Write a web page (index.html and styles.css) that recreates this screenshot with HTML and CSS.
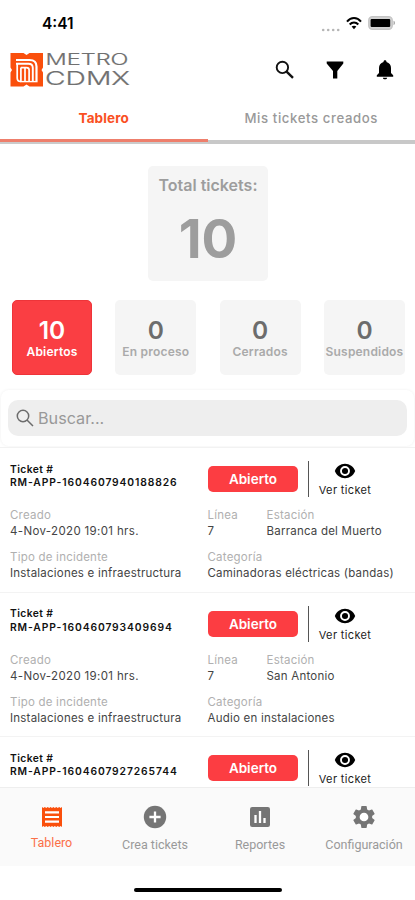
FILE: index.html
```html
<!DOCTYPE html>
<html lang="es">
<head>
<meta charset="utf-8">
<title>Metro CDMX</title>
<link rel="stylesheet" href="styles.css">
</head>
<body>
<div class="app">
  <div class="status">
    <span class="time">4:41</span>
    <div class="signals">
      <svg width="20" height="16" viewBox="0 0 20 16" fill="#b5b5b5"><circle cx="2.2" cy="11" r="1.3"/><circle cx="7.2" cy="11" r="1.3"/><circle cx="12.2" cy="11" r="1.3"/><circle cx="17.2" cy="11" r="1.3"/></svg>
      <svg class="wifi" width="16" height="13" viewBox="0 0 16 13" fill="none" stroke="#000" stroke-width="2"><path d="M1 4.7C5-.1 11-.1 15 4.7M3.7 7.5c2.5-2.8 6.1-2.8 8.6 0"/><path d="M5.6 9.6c1.500-1.300 3.300-1.300 4.800 0L8 12.300z" fill="#000" stroke="none"/></svg>
      <svg width="28" height="14" viewBox="0 0 28 14"><rect x=".7" y=".7" width="23.600" height="12.600" rx="3.600" fill="#d2d2d2" stroke="#c4c4c4" stroke-width="1.200"/><rect x="2.600" y="3" width="19.600" height="8" rx="1"/><path d="M25.500 4.800c2 .6 2 3.800 0 4.400z" fill="#aaa"/></svg>
    </div>
  </div>

  <header class="header">
    <svg class="logo" width="122" height="36" viewBox="0 0 122 36">
      <path d="M.5 0h13l3 2 3-2H33v14.500L31.500 17l1.500 2.500V33.500H19.500l-3-2-3 2H.5v-14L2 17 .5 14.500z" fill="#fa4f0c"/>
      <g fill="none" stroke="#fff">
        <path d="M6 7h13.500c5 0 7 2.500 7 6.500V28" stroke-width="2.200"/>
        <path d="M6 10.800h12.500c3 0 4.300 1.500 4.300 4.200V28" stroke-width="1.900"/>
        <path d="M7.200 10.500V25c0 2.300 1 3.400 3.300 3.400M10.900 14.400V28M10.900 14.600h5.600c1.700 0 2.600.9 2.600 2.400V28M15 15v13" stroke-width="1.700"/>
        <path d="M10 28.600h17.600" stroke-width="1.400"/>
      </g>
      <text class="logo-text" x="35.500" y="12.300" font-size="15.300" textLength="83" lengthAdjust="spacingAndGlyphs">METRO</text>
      <text class="logo-text" x="35" y="31.800" font-size="18.300" textLength="85" lengthAdjust="spacingAndGlyphs">CDMX</text>
    </svg>
    <div class="actions">
      <svg width="20" height="20" viewBox="0 0 20 20" fill="none" stroke="#111"><circle cx="8.400" cy="7.400" r="5.700" stroke-width="1.900"/><path d="M12.600 11.600l6.400 6.200" stroke-width="2.400"/></svg>
      <svg width="18" height="20" viewBox="0 0 18 20"><path d="M.7 1.500h16.600v2L11.300 11v7.600H7V11L.7 3.500z"/></svg>
      <svg width="18" height="20" viewBox="0 0 18 20"><path d="M9 .3c1 0 1.500.7 1.500 1.600 3 .9 4.500 3 4.500 6V13l2.200 2.300v1.400H.8v-1.400L3 13V7.900c0-3 1.500-5.100 4.500-6C7.500 1 8 .3 9 .3zM6.900 17.700h4.200c0 2.200-4.200 2.200-4.200 0z"/></svg>
    </div>
  </header>

  <nav class="tabs">
    <span class="tab active">Tablero</span>
    <span class="tab">Mis tickets creados</span>
  </nav>

  <section class="total">
    <span class="total-label">Total tickets:</span>
    <span class="total-value">10</span>
  </section>

  <section class="stats">
    <div class="stat selected"><b>10</b><span>Abiertos</span></div>
    <div class="stat"><b>0</b><span>En proceso</span></div>
    <div class="stat"><b>0</b><span>Cerrados</span></div>
    <div class="stat"><b>0</b><span>Suspendidos</span></div>
  </section>

  <div class="search">
    <div class="field">
      <svg width="18" height="18" viewBox="0 0 18 18" fill="none" stroke="#6c6c6c" stroke-width="1.500"><circle cx="7" cy="7" r="5.700"/><path d="M11 11l6 6"/></svg>
      <span>Buscar...</span>
    </div>
  </div>

  <main class="list">
    <article class="ticket">
      <div class="top">
        <div class="id">Ticket #<br><span class="code">RM-APP-1604607940188826</span></div>
        <span class="badge">Abierto</span>
        <div class="view"><svg width="22" height="16" viewBox="0 0 22 16"><path d="M11 .8c4.600 0 8.500 2.900 10.200 7.200-1.700 4.300-5.600 7.200-10.200 7.200S2.500 12.300.8 8C2.500 3.700 6.400.8 11 .8z"/><circle cx="11" cy="8" r="4" fill="none" stroke="#fff" stroke-width="1.900"/></svg><span>Ver ticket</span></div>
      </div>
      <dl class="info">
        <div><dt>Creado</dt><dd class="date">4-Nov-2020 19:01 hrs.</dd></div>
        <div><dt>Línea</dt><dd>7</dd></div>
        <div><dt>Estación</dt><dd>Barranca del Muerto</dd></div>
        <div><dt>Tipo de incidente</dt><dd>Instalaciones e infraestructura</dd></div>
        <div class="wide"><dt>Categoría</dt><dd>Caminadoras eléctricas (bandas)</dd></div>
      </dl>
    </article>
    <article class="ticket">
      <div class="top">
        <div class="id">Ticket #<br><span class="code">RM-APP-160460793409694</span></div>
        <span class="badge">Abierto</span>
        <div class="view"><svg width="22" height="16" viewBox="0 0 22 16"><path d="M11 .8c4.600 0 8.500 2.900 10.200 7.200-1.700 4.300-5.600 7.200-10.200 7.200S2.500 12.300.8 8C2.500 3.700 6.400.8 11 .8z"/><circle cx="11" cy="8" r="4" fill="none" stroke="#fff" stroke-width="1.900"/></svg><span>Ver ticket</span></div>
      </div>
      <dl class="info">
        <div><dt>Creado</dt><dd class="date">4-Nov-2020 19:01 hrs.</dd></div>
        <div><dt>Línea</dt><dd>7</dd></div>
        <div><dt>Estación</dt><dd>San Antonio</dd></div>
        <div><dt>Tipo de incidente</dt><dd>Instalaciones e infraestructura</dd></div>
        <div class="wide"><dt>Categoría</dt><dd>Audio en instalaciones</dd></div>
      </dl>
    </article>
    <article class="ticket">
      <div class="top">
        <div class="id">Ticket #<br><span class="code">RM-APP-1604607927265744</span></div>
        <span class="badge">Abierto</span>
        <div class="view"><svg width="22" height="16" viewBox="0 0 22 16"><path d="M11 .8c4.600 0 8.500 2.900 10.200 7.200-1.700 4.300-5.600 7.200-10.200 7.200S2.500 12.300.8 8C2.500 3.700 6.400.8 11 .8z"/><circle cx="11" cy="8" r="4" fill="none" stroke="#fff" stroke-width="1.900"/></svg><span>Ver ticket</span></div>
      </div>
    </article>
  </main>

  <nav class="bottom">
    <div class="item current">
      <svg width="22" height="24" viewBox="0 0 22 24"><path d="M1 2l1.400 1 1.400-1 1.500 1 1.400-1 1.500 1L9.600 2 11 3l1.400-1 1.400 1 1.500-1 1.400 1 1.500-1 1.400 1L21 2v20l-1.400-1-1.400 1-1.500-1-1.400 1-1.500-1-1.400 1L11 21l-1.400 1-1.400-1-1.500 1-1.400-1-1.500 1-1.400-1L1 22z" fill="#fa4f0c"/><path d="M4 7.400h14M4 12h14M4 16.600h14" stroke="#fff" stroke-width="2.200"/></svg>
      <span>Tablero</span>
    </div>
    <div class="item">
      <svg width="24" height="24" viewBox="0 0 24 24"><circle cx="12" cy="12" r="11.200" fill="#757575"/><path d="M12 6.400v11.200M6.400 12h11.200" stroke="#fff" stroke-width="2.300"/></svg>
      <span>Crea tickets</span>
    </div>
    <div class="item">
      <svg width="24" height="24" viewBox="0 0 24 24"><rect x="2" y="2" width="20" height="20" rx="2.200" fill="#757575"/><path d="M7.500 18v-8M12 18V6M16.500 18v-5" stroke="#fff" stroke-width="2.300"/></svg>
      <span>Reportes</span>
    </div>
    <div class="item">
      <svg width="24" height="24" viewBox="1 1 22 22"><path fill="#757575" d="M19.430 12.980c.04-.32.07-.64.07-.98s-.03-.66-.07-.98l2.110-1.650c.19-.15.24-.42.12-.64l-2-3.460c-.12-.22-.39-.3-.61-.22l-2.490 1c-.52-.4-1.080-.73-1.690-.98l-.38-2.650C14.460 2.180 14.250 2 14 2h-4c-.25 0-.46.18-.49.42l-.38 2.650c-.61.25-1.170.59-1.690.98l-2.490-1c-.23-.09-.49 0-.61.22l-2 3.460c-.13.22-.07.49.12.64l2.110 1.650c-.04.32-.07.65-.07.98s.03.66.07.98l-2.110 1.650c-.19.15-.24.42-.12.64l2 3.460c.12.22.39.3.61.22l2.490-1c.52.4 1.080.73 1.690.98l.38 2.650c.03.24.24.42.49.42h4c.25 0 .46-.18.49-.42l.38-2.650c.61-.25 1.170-.59 1.690-.98l2.490 1c.23.09.49 0 .61-.22l2-3.460c.12-.22.07-.49-.12-.64l-2.110-1.650z"/><circle cx="12" cy="12" r="4" fill="#fff"/></svg>
      <span>Configuración</span>
    </div>
  </nav>
  <div class="home"><i></i></div>
</div>
</body>
</html>
```
FILE: styles.css
```css
* { box-sizing: border-box; }
body { margin: 0; background: #fff; font-family: Inter, "Liberation Sans", sans-serif; }
svg { display: block; flex: none; }
.app { width: 415px; height: 900px; display: flex; flex-direction: column; overflow: hidden; }
.app > * { flex: none; }

.status { height: 46px; padding: 0 19px 0 42px; display: flex; justify-content: space-between; align-items: center; }
.time { font-size: 15.5px; font-weight: 600; color: #000; }
.signals { display: flex; align-items: center; }
.signals svg:first-child { margin-top: 7px; }
.wifi { margin: 0 6px 0 5px; }

.header { height: 52px; padding: 7px 21px 0 10px; display: flex; justify-content: space-between; align-items: flex-start; }
.logo { overflow: visible; }
.logo-text { font-family: Inter, sans-serif; font-weight: 300; fill: #707070; stroke: #707070; stroke-width: .2px; }
.actions { display: flex; gap: 32px; padding-top: 7px; }

.tabs { height: 46px; display: grid; grid-template-columns: 1fr 1fr; }
.tab { height: 46px; padding-top: 11px; line-height: 18px; text-align: center; font-size: 13.2px; font-weight: 500; letter-spacing: .6px; color: #999; border-bottom: 4px solid #c8c8c8; }
.tab.active { height: 44px; color: #fa4f22; font-size: 13.5px; font-weight: 700; letter-spacing: .15px; border-bottom: 3px solid #ee7f6c; box-shadow: 0 2px #cbcbcb; }

.total { width: 120px; height: 115px; margin: 22px auto 0 148px; padding-top: 9px; border-radius: 5px; background: #f5f5f5; text-align: center; color: #9d9d9d; display: flex; flex-direction: column; }
.total-label { font-size: 16px; line-height: 20px; font-weight: 600; white-space: nowrap; }
.total-value { font-size: 53px; line-height: 64px; font-weight: 700; margin-top: 12px; }

.stats { margin: 19px 10px 0 12px; display: flex; justify-content: space-between; }
.stat { width: 81px; height: 75px; border-radius: 5px; background: #f5f5f5; display: flex; flex-direction: column; align-items: center; padding-top: 16px; white-space: nowrap; }
.stat b { font-size: 24.5px; line-height: 28px; font-weight: 600; color: #6c6c6c; }
.stat span { font-size: 12px; line-height: 16px; font-weight: 600; color: #aaa; letter-spacing: .2px; }
.stat.selected { background: #fa3e43; border: 1px solid #ee3439; padding-top: 15px; width: 80px; }
.stat.selected b, .stat.selected span { color: #fff; }

.search { height: 56px; margin: 15px 1px 1px; padding: 10px 7px; border-radius: 8px; box-shadow: 0 0 3px #eee; }
.field { height: 36px; border-radius: 10px; background: #eee; display: flex; align-items: center; gap: 4px; padding-left: 8px; font-size: 16.2px; color: #999; }

.list { height: 340px; overflow: hidden; border-top: 1px solid #f2f2f2; }
.ticket { height: 144.5px; border-bottom: 1.5px solid #f3f3f3; padding: 13px 0 0 10px; color: #444; white-space: nowrap; }
.top { display: grid; grid-template-columns: 198px 100px 73px; height: 46px; }
.id { font-size: 10.3px; line-height: 13.5px; font-weight: 600; color: #111; padding-top: 1.5px; letter-spacing: .4px; }
.code { letter-spacing: .9px; }
.badge { width: 90px; height: 26px; margin-top: 5px; border-radius: 5px; background: #fc3d42; color: #fff; font-size: 13.5px; line-height: 26px; font-weight: 600; text-align: center; }
.view { height: 36px; border-left: 1px solid #555; display: flex; flex-direction: column; align-items: center; font-size: 11px; letter-spacing: .35px; line-height: 14px; color: #222; padding-top: 2px; gap: 4px; }
.info { margin: 0; display: grid; grid-template-columns: 197.5px 59px 1fr; row-gap: 10px; font-size: 11.5px; line-height: 16px; letter-spacing: .22px; }
.wide { grid-column: span 2; }
dt { color: #b0b0b0; }
dd { margin: 0; }
.date { letter-spacing: .35px; }

.bottom { height: 79px; background: #fafafa; border-top: 1px solid #eee; display: grid; grid-template-columns: 103px 104px 106px 102px; }
.item { display: flex; flex-direction: column; align-items: center; padding-top: 17px; font-family: Roboto, sans-serif; font-size: 12.5px; color: #999; white-space: nowrap; }
.item svg { height: 24px; }
.item span { line-height: 16px; margin-top: 8px; }
.item.current { color: #fa7048; }
.item.current span { margin-top: 6px; }
.home { display: flex; justify-content: center; padding-top: 22px; }
.home i { width: 148px; height: 4px; border-radius: 2px; background: #000; }
```
